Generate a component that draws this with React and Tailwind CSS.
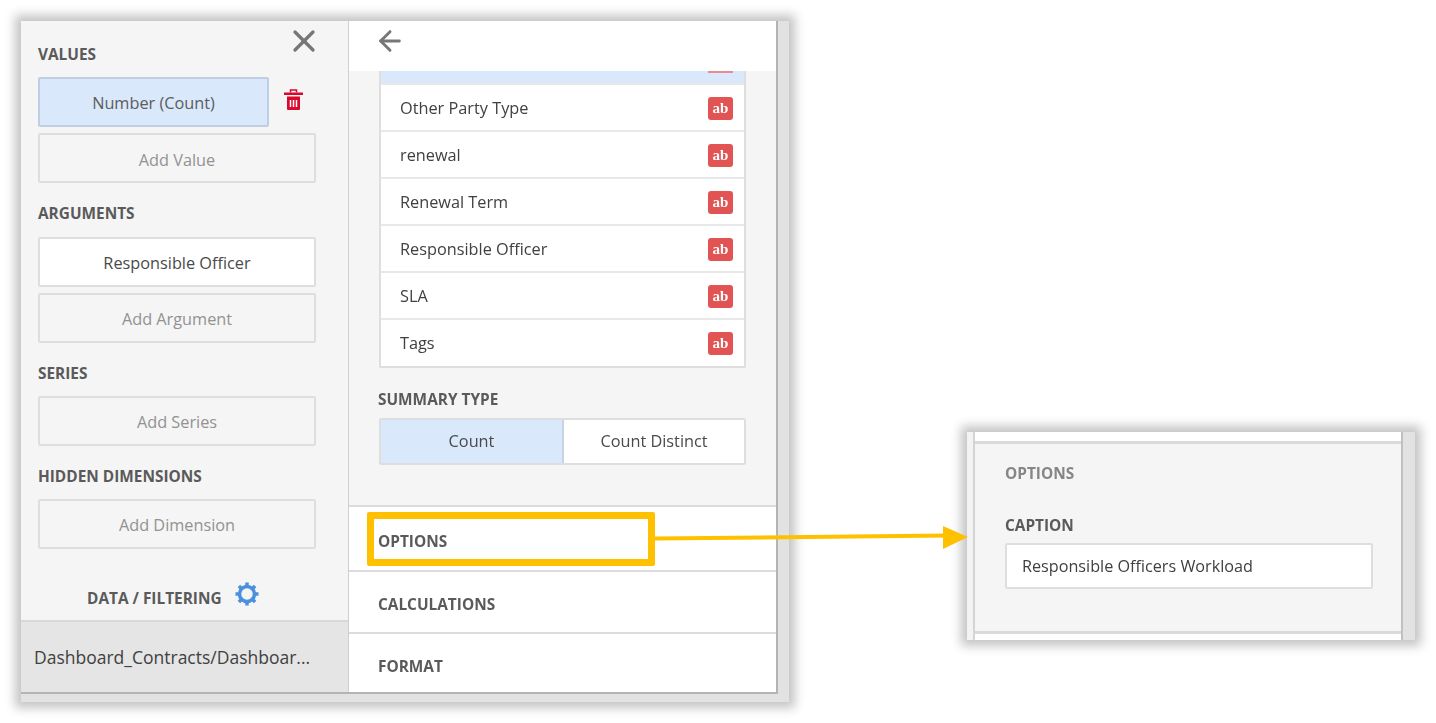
import React from "react";
import { ArrowLeft, X } from "lucide-react";

const fields = ["Other Party Type", "renewal", "Renewal Term", "Responsible Officer", "SLA", "Tags"];

function Heading({ children, className = "" }) {
  return <div className={`text-[15.4px] leading-[20px] font-bold text-[#5a5a5a] ${className}`}>{children}</div>;
}

function AddButton({ children, className = "" }) {
  return (
    <div className={`w-[278px] h-[50px] flex items-center justify-center rounded-[2px] border-2 border-[#dedede] text-[16.3px] text-[#929292] ${className}`}>
      {children}
    </div>
  );
}

function TypeBadge() {
  return (
    <span className="w-[25px] h-[23px] flex items-center justify-center rounded-[3px] bg-[#e25454] text-white text-[15px] leading-none font-bold font-['Liberation_Serif',serif]">
      ab
    </span>
  );
}

function Trash() {
  return (
    <svg width="19" height="22" viewBox="0 0 19 22" className="ml-[15px] mb-[4px]">
      <path d="M6.500 3.500V1h6v2.500" fill="none" stroke="#d8092c" strokeWidth="1.500" />
      <path d="M0 3.500h19V6H0zM3 7.500h13V20a1 1 0 0 1-1 1H4a1 1 0 0 1-1-1z" fill="#d8092c" />
      <path d="M6.500 11v7M9.500 11v7M12.500 11v7" stroke="#fff" strokeWidth="1.500" />
    </svg>
  );
}

function Gear() {
  return (
    <svg width="26" height="26" viewBox="0 0 26 26" className="mb-[6px] -translate-y-[2px]">
      <circle cx="13" cy="13" r="7.500" fill="none" stroke="#4a90dc" strokeWidth="3.500" />
      <path d="M13 1.500v4M13 20.500v4M1.500 13h4M20.500 13h4M4.900 4.900l2.800 2.800M18.300 18.300l2.800 2.800M4.900 21.100l2.800-2.800M18.300 7.700l2.800-2.800" stroke="#4a90dc" strokeWidth="3.500" />
    </svg>
  );
}

function LeftColumn() {
  return (
    <div className="w-[328px] flex flex-col border-r border-[#cfcfcf] bg-[#f5f5f5] relative">
      <X className="absolute left-[265px] top-[2px] text-[#777777]" size={36} strokeWidth={2.200} />
      <div className="flex-1 pl-[17px] pt-[24px]">
        <Heading>VALUES</Heading>
        <div className="flex items-center mt-[12px]">
          <div className="w-[231px] h-[50px] pt-[2px] flex items-center justify-center rounded-[2px] border-2 border-[#bfcee0] bg-[#d9e8fb] text-[16.3px] text-[#5c5c5c]">
            Number (Count)
          </div>
          <Trash />
        </div>
        <AddButton className="mt-[6px] pt-[4px]">Add Value</AddButton>
        <Heading className="mt-[21px]">ARGUMENTS</Heading>
        <div className="w-[278px] h-[50px] pt-[2px] mt-[13px] flex items-center justify-center rounded-[2px] border-2 border-[#dedede] bg-white text-[16.3px] text-[#4a4a4a]">
          Responsible Officer
        </div>
        <AddButton className="mt-[6px] pt-[2px]">Add Argument</AddButton>
        <Heading className="mt-[21px]">SERIES</Heading>
        <AddButton className="mt-[12px] pt-[2px]">Add Series</AddButton>
        <Heading className="mt-[21px]">HIDDEN DIMENSIONS</Heading>
        <AddButton className="mt-[12px] pt-[2px]">Add Dimension</AddButton>
        <div className="flex items-center gap-[12px] mt-[34px] ml-[49px]">
          <Heading>DATA / FILTERING</Heading>
          <Gear />
        </div>
      </div>
      <div className="h-[72px] flex items-center pl-[13px] border-t-2 border-[#d8d8d8] bg-[#e5e5e5] text-[17.5px] text-[#404040]">
        Dashboard_Contracts/Dashboar...
      </div>
    </div>
  );
}

function RightColumn() {
  return (
    <div className="w-[427px] flex flex-col bg-white">
      <div className="h-[50px] pl-[25px] pt-[4px]">
        <ArrowLeft className="text-[#777777]" size={32} strokeWidth={2.200} />
      </div>
      <div className="h-[436px] px-[30px] bg-[#f5f5f5] border-b-2 border-[#dcdcdc]">
        <div className="w-[367px] border-x-2 border-b-2 border-[#dedede] bg-white rounded-b-[2px]">
          <div className="h-[14px] flex justify-end pr-[11px] bg-[#d9e8fb] border-b-2 border-[#e8e8e8]">
            <div className="w-[25px] h-[2px] bg-[#eb8a93]" />
          </div>
          {fields.map((f, i) => (
            <div key={f} className={`flex items-center justify-between pl-[19px] pr-[11px] text-[16.3px] text-[#404040] ${i < 5 ? "h-[47px] pt-[2px] border-b-2 border-[#e8e8e8]" : "h-[46px]"}`}>
              <span>{f}</span>
              <TypeBadge />
            </div>
          ))}
        </div>
        <Heading className="mt-[22px] -ml-px">SUMMARY TYPE</Heading>
        <div className="w-[367px] h-[47px] mt-[8px] flex rounded-[2px] border-2 border-[#dedede] bg-white text-[16.3px] text-[#4a4a4a]">
          <div className="w-[183px] flex items-center justify-center bg-[#d9e8fb] border-r-2 border-[#c8d4e2]">Count</div>
          <div className="flex-1 flex items-center justify-center">Count Distinct</div>
        </div>
      </div>
      <div className="h-[65px] flex items-center pl-[29px] pt-[6px] border-b-2 border-[#dcdcdc]"><Heading>OPTIONS</Heading></div>
      <div className="h-[62px] flex items-center pl-[29px] pt-[6px] border-b-2 border-[#dcdcdc]"><Heading>CALCULATIONS</Heading></div>
      <div className="flex-1 flex items-center pl-[29px] pt-[8px]"><Heading>FORMAT</Heading></div>
    </div>
  );
}

function OptionsCard() {
  return (
    <div className="w-[448px] h-[208px] flex shadow-[0_0_10px_6px_#c4c4c4] bg-[#e2e2e2]">
      <div className="w-[8px] bg-[#f3f3f3] border-r-2 border-[#d4d4d4]" />
      <div className="w-[428px] bg-white border-r-2 border-[#c0c0c0]">
        <div className="h-[9px]" />
        <div className="h-[193px] pl-[30px] pt-[20px] bg-[#f5f5f5] border-y-3 border-[#dadada]">
          <Heading className="text-[#868686]">OPTIONS</Heading>
          <Heading className="mt-[32px]">CAPTION</Heading>
          <div className="w-[368px] h-[46px] mt-[7px] flex items-center pl-[15px] rounded-[2px] border-2 border-[#dedede] bg-white text-[16.2px] text-[#404040]">
            Responsible Officers Workload
          </div>
        </div>
      </div>
    </div>
  );
}

export default function App() {
  return (
    <div className="relative w-[1436px] h-[723px] overflow-hidden bg-white font-['Open_Sans',sans-serif]">
      <div className="flex items-start pl-[21px] pt-[21px] blur-[0.4px]">
        <div className="flex-none h-[681px] w-[768px] bg-[#e2e2e2] shadow-[0_0_10px_6px_#c4c4c4]">
          <div className="h-[673px] w-[757px] flex border-r-2 border-b-2 border-[#b4b4b4] bg-white">
            <LeftColumn />
            <RightColumn />
          </div>
        </div>
        <div className="flex-none ml-[178px] mt-[411px]">
          <OptionsCard />
        </div>
      </div>
      <div className="absolute left-[367px] top-[512px] w-[288px] h-[54px] rounded-[2px] border-[7px] border-[#ffc000]" />
      <svg className="absolute left-0 top-0" width="1436" height="723">
        <path d="M655 538.500L946 535.500" stroke="#ffc000" strokeWidth="4" fill="none" />
        <path d="M943 526L968 537L943 549Z" fill="#ffc000" />
      </svg>
    </div>
  );
}
